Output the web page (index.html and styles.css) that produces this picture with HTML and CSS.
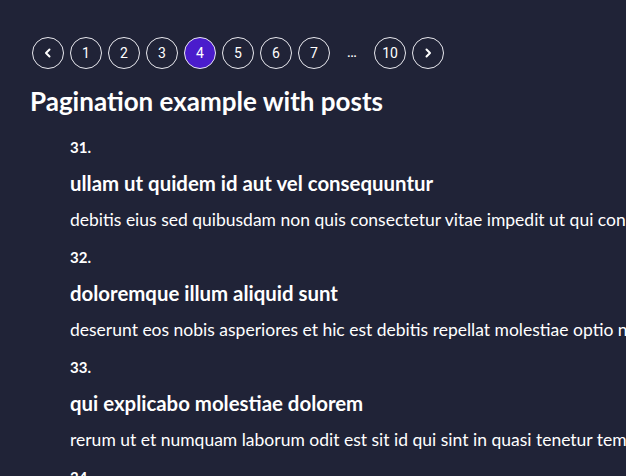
FILE: index.html
```html
<!DOCTYPE html>
<html lang="en">
<head>
<meta charset="utf-8">
<link rel="stylesheet" href="styles.css">
</head>
<body>
<div class="page">
  <nav class="pagination">
    <button class="pg"><svg width="12" height="12" viewBox="0 0 12 12"><path d="M7.5 2.5 L4 6 L7.5 9.5" fill="none" stroke="#fff" stroke-width="2" stroke-linecap="round" stroke-linejoin="round"/></svg></button>
    <button class="pg">1</button>
    <button class="pg">2</button>
    <button class="pg">3</button>
    <button class="pg active">4</button>
    <button class="pg">5</button>
    <button class="pg">6</button>
    <button class="pg">7</button>
    <span class="pg dots">...</span>
    <button class="pg">10</button>
    <button class="pg"><svg width="12" height="12" viewBox="0 0 12 12"><path d="M4.5 2.5 L8 6 L4.5 9.5" fill="none" stroke="#fff" stroke-width="2" stroke-linecap="round" stroke-linejoin="round"/></svg></button>
  </nav>
  <h1 class="title">Pagination example with posts</h1>
  <div class="posts">
    <article class="post">
      <div class="num">31.</div>
      <h2 class="post-title">ullam ut quidem id aut vel consequuntur</h2>
      <p class="post-body">debitis eius sed quibusdam non quis consectetur vitae impedit ut qui consequatur sed aut in quidem sit nostrum et maiores adipisci atque</p>
    </article>
    <article class="post">
      <div class="num">32.</div>
      <h2 class="post-title">doloremque illum aliquid sunt</h2>
      <p class="post-body">deserunt eos nobis asperiores et hic est debitis repellat molestiae optio nihil ratione ut eos beatae quibusdam distinctio maiores</p>
    </article>
    <article class="post">
      <div class="num">33.</div>
      <h2 class="post-title">qui explicabo molestiae dolorem</h2>
      <p class="post-body">rerum ut et numquam laborum odit est sit id qui sint in quasi tenetur tempore aperiam et quaerat qui in rerum officiis sequi cumque quod</p>
    </article>
    <article class="post">
      <div class="num">34.</div>
      <h2 class="post-title">magnam ut rerum iure</h2>
      <p class="post-body">ea velit perferendis earum ut voluptatem voluptate itaque iusto totam pariatur in nemo voluptatem voluptatem autem magni tempora minima in</p>
    </article>
  </div>
</div>
</body>
</html>
```
FILE: styles.css
```css
html, body {
  margin: 0;
  padding: 0;
  background: #202337;
  overflow: hidden;
}
.page {
  padding: 37px 0 0 30px;
  color: #ffffff;
  font-family: Lato, sans-serif;
}
.pagination {
  display: flex;
  align-items: center;
  gap: 6px;
  margin-left: 2px;
}
.pg {
  box-sizing: border-box;
  width: 32px;
  height: 32px;
  border-radius: 50%;
  border: 1.5px solid #e8e8ee;
  background: transparent;
  color: #fff;
  font-family: Roboto, sans-serif;
  font-size: 14px;
  display: flex;
  align-items: center;
  justify-content: center;
  padding: 0;
}
.pg.active {
  background: #4a1ccc;
}
.pg.dots {
  border: none;
  font-size: 11px;
  font-weight: bold;
}
.title {
  margin: 16px 0 0 0;
  font-size: 26px;
  font-weight: 700;
  line-height: 32px;
}
.posts {
  padding-left: 40px;
  margin-top: 20px;
}
.post {
  height: 110px;
}
.num {
  font-size: 15px;
  font-weight: 700;
  line-height: 20px;
}
.post-title {
  margin: 14px 0 0 0;
  font-size: 20.4px;
  font-weight: 700;
  line-height: 24px;
}
.post-body {
  margin: 14px 0 0 0;
  font-size: 17.5px;
  line-height: 22px;
  white-space: nowrap;
}
```
